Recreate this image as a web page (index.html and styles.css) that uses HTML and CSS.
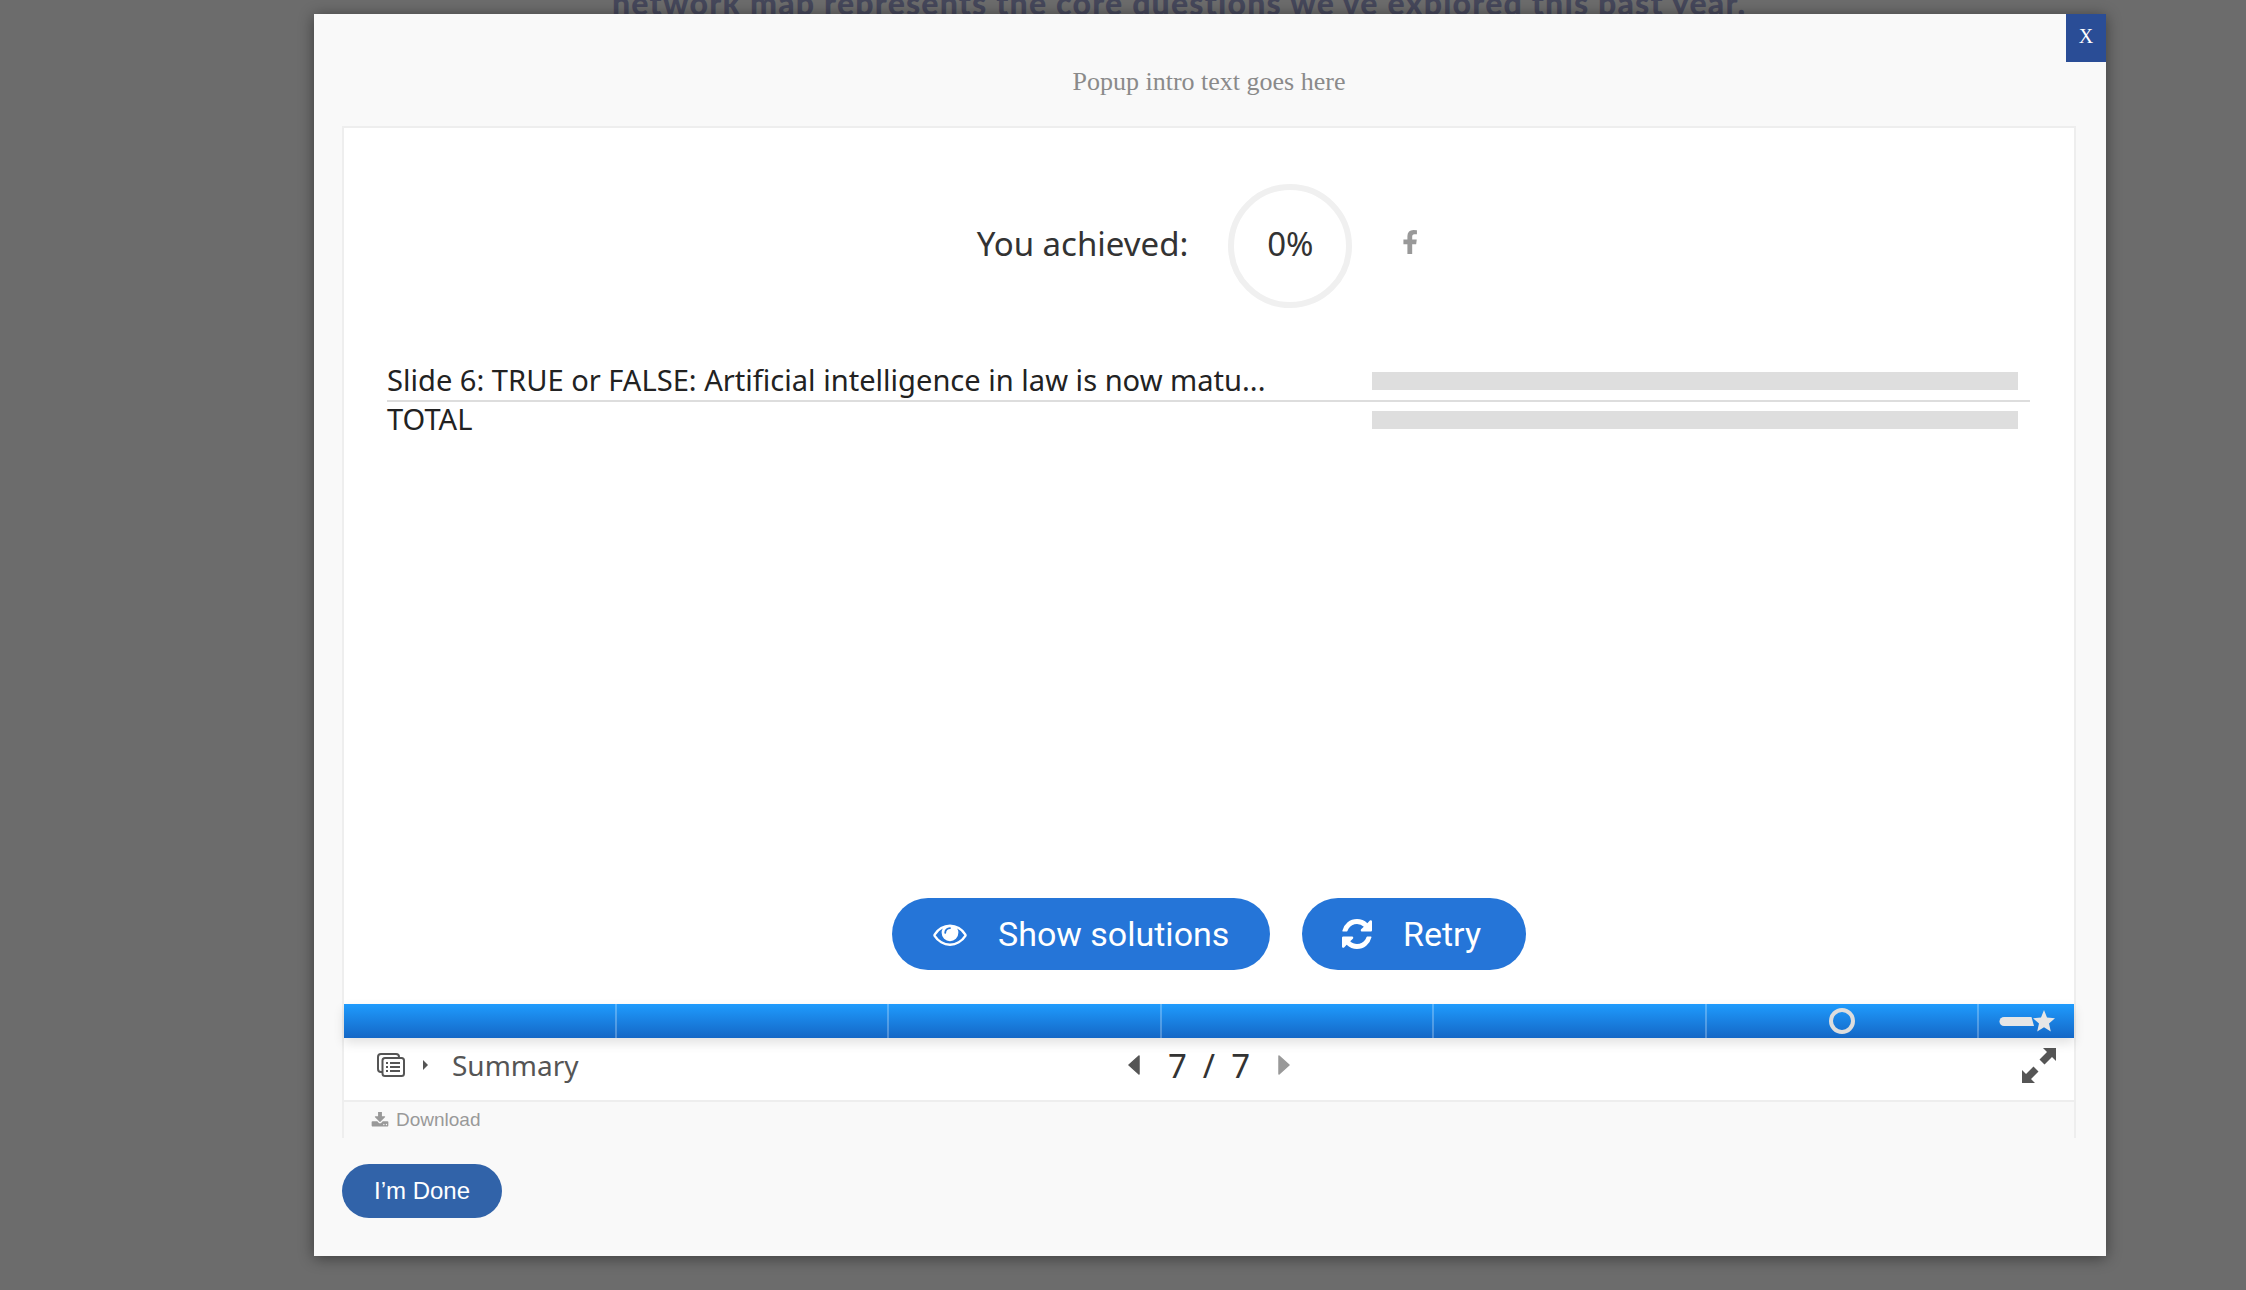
FILE: index.html
```html
<!DOCTYPE html>
<html lang="en">
<head>
  <meta charset="UTF-8" />
  <title>Popup</title>
  <link rel="stylesheet" href="styles.css">
</head>
<body>

<div class="page-text">network map represents the core questions we've explored this past year.</div>

<div class="popup">
  <a class="popup-close">X</a>
  <p class="popup-intro">Popup intro text goes here</p>

  <div class="course">
    <div class="stage">
      <div class="score">
        <span class="score-label">You achieved:</span>
        <span class="score-circle">0%</span>
        <span class="score-share">
          <svg class="icon-f" viewBox="400 0 1000 1536"><path d="M1343 12v264h-157q-86 0-116 36t-30 108v189h293l-39 296h-254v759h-306v-759h-255v-296h255v-218q0-186 104-288.500t277-102.500q147 0 228 12z"/></svg>
        </span>
      </div>

      <!-- rijen met resultaat -->
      <div class="result-row result-row-line">
        <span class="result-title">Slide 6: TRUE or FALSE: Artificial intelligence in law is now matu...</span>
        <span class="result-bar"></span>
      </div>
      <div class="result-row">
        <span class="result-title">TOTAL</span>
        <span class="result-bar"></span>
      </div>

      <div class="actions">
        <a class="btn-round btn-solutions">
          <svg class="icon-eye" viewBox="0 200 1792 1392"><path d="M1664 960q-152-236-381-353 61 104 61 225 0 185-131.500 316.500t-316.500 131.500-316.500-131.500-131.500-316.500q0-121 61-225-229 117-381 353 133 205 333.500 326.500t434.500 121.500 434.500-121.500 333.500-326.500zm-720-384q0-20-14-34t-34-14q-125 0-214.500 89.500t-89.500 214.500q0 20 14 34t34 14 34-14 14-34q0-86 61-147t147-61q20 0 34-14t14-34zm848 384q0 34-20 69-140 230-376.500 368.500t-499.500 138.500-499.500-139-376.500-368q-20-35-20-69t20-69q140-229 376.500-368t499.500-139 499.500 139 376.500 368q20 35 20 69z"/></svg>
          Show solutions
        </a>
        <a class="btn-round btn-retry">
          <svg class="icon-retry" viewBox="128 128 1536 1536"><path d="M1639 1056q0 5-1 7-64 268-268 434.500t-478 166.500q-146 0-282.500-55t-243.500-157l-129 129q-19 19-45 19t-45-19-19-45v-448q0-26 19-45t45-19h448q26 0 45 19t19 45-19 45l-137 137q71 66 161 102t187 36q134 0 250-65t186-179q11-17 53-117 8-23 30-23h192q13 0 22.500 9.500t9.500 22.500zm25-800v448q0 26-19 45t-45 19h-448q-26 0-45-19t-19-45 19-45l138-138q-148-137-349-137-134 0-250 65t-186 179q-11 17-53 117-8 23-30 23h-199q-13 0-22.500-9.500t-9.500-22.500v-7q65-268 270-434.500t480-166.500q146 0 284 55.500t245 156.500l130-129q19-19 45-19t45 19 19 45z"/></svg>
          Retry
        </a>
      </div>
    </div>

    <div class="progress">
      <div class="progress-part"></div>
      <div class="progress-part"></div>
      <div class="progress-part"></div>
      <div class="progress-part"></div>
      <div class="progress-part"></div>
      <div class="progress-part"><span class="progress-dot"></span></div>
      <div class="progress-end">
        <svg class="icon-star" viewBox="0 0 56 22">
          <path d="M5 7H32.500L35 16H5A4.500 4.500 0 0 1 5 7Z"/>
          <path d="M45 0L48 7.500L56 8.200L50 13.500L51.800 21.500L45 17.300L38.200 21.500L40 13.500L34 8.200L42 7.500Z"/>
        </svg>
      </div>
    </div>

    <div class="footer-bar">
      <div class="footer-left">
        <svg class="icon-list" viewBox="0 0 28 24">
          <rect class="icon-line" x="1" y="1" width="21" height="18" rx="3"/>
          <rect class="icon-front" x="5.500" y="5" width="21.500" height="18" rx="2.500"/>
          <path class="icon-line" d="M9 10h2M13 10h10M9 14h2M13 14h10M9 18h2M13 18h10"/>
        </svg>
        <svg class="icon-caret" viewBox="0 0 5 10"><path d="M0 0L5 5L0 10Z"/></svg>
        <span class="footer-title">Summary</span>
      </div>
      <div class="pager">
        <svg class="pager-arrow" viewBox="0 0 12 20"><path d="M11 1V19L1 10Z"/></svg>
        <span class="pager-num">7</span>
        <span class="pager-num">/</span>
        <span class="pager-num">7</span>
        <svg class="pager-arrow pager-next" viewBox="0 0 12 20"><path d="M1 1V19L11 10Z"/></svg>
      </div>
      <div class="footer-right">
        <svg class="icon-expand" viewBox="0 0 34 35">
          <path d="M21 0H34V13L30 9L22.500 16.500L17.500 11.500L25 4Z"/>
          <path d="M13 35H0V22L4 26L11.500 18.500L16.500 23.500L9 31Z"/>
        </svg>
      </div>
    </div>

    <div class="download-bar">
      <svg class="icon-download" viewBox="0 128 1792 1536"><path d="M1344 1344q0-26-19-45t-45-19-45 19-19 45 19 45 45 19 45-19 19-45zm256 0q0-26-19-45t-45-19-45 19-19 45 19 45 45 19 45-19 19-45zm128-224v320q0 40-28 68t-68 28h-1472q-40 0-68-28t-28-68v-320q0-40 28-68t68-28h465l135 136q58 56 136 56t136-56l136-136h464q40 0 68 28t28 68zm-325-569q17 41-14 70l-448 448q-18 19-45 19t-45-19l-448-448q-31-29-14-70 17-39 59-39h256v-448q0-26 19-45t45-19h256q26 0 45 19t19 45v448h256q42 0 59 39z"/></svg>
      Download
    </div>
  </div>

  <a class="btn-done">I’m Done</a>
</div>

</body>
</html>
```

FILE: styles.css
```css
body {
  margin: 0;
  height: 1290px;
  overflow: hidden;
  background: #6c6c6c;
  font-family: 'Noto Sans', sans-serif;
}

/* tekst van de pagina achter de popup */
.page-text {
  height: 14px;
  overflow: hidden;
  padding-left: 612px;
  font-family: 'Lato', sans-serif;
  font-size: 32px;
  font-weight: 900;
  line-height: 5px;
  letter-spacing: 1.2px;
  white-space: nowrap;
  color: #45475a;
}

.popup {
  position: relative;
  box-sizing: border-box;
  width: 1792px;
  height: 1242px;
  margin-left: 314px;
  padding: 0 30px 0 28px;
  background: #f9f9f9;
  box-shadow: 0 2px 14px rgb(0 0 0 / 0.45);
}
.popup-close {
  position: absolute;
  top: 0;
  right: 0;
  width: 40px;
  height: 48px;
  background: #2a4d96;
  color: white;
  font-family: 'Liberation Serif', serif;
  font-size: 20px;
  line-height: 44px;
  text-align: center;
}
.popup-intro {
  height: 112px;
  margin: 0;
  font-family: 'Liberation Serif', serif;
  font-size: 26px;
  line-height: 136px;
  text-align: center;
  color: #8a8a8a;
}

.course {
  border: 2px solid #eeeeee;
  border-bottom: none;
}
.stage {
  display: flex;
  flex-direction: column;
  height: 876px;
  background: white;
}

/* score */
.score {
  display: flex;
  justify-content: center;
  align-items: center;
  padding-top: 56px;
  color: #333;
  font-size: 33px;
}
.score-label { margin-right: 40px; padding-bottom: 6px; }
.score-circle {
  box-sizing: border-box;
  display: flex;
  justify-content: center;
  align-items: center;
  width: 124px;
  height: 124px;
  padding-bottom: 6px;
  border: 6px solid #f0f0f0;
  border-radius: 50%;
  margin-right: 50px;
}
.score-share { display: flex; padding: 0 23px 8px 0; }
.icon-f { width: 16px; height: 24px; fill: #999; }

/* resultaten */
.result-row {
  display: flex;
  align-items: center;
  justify-content: space-between;
  height: 36px;
  margin: 0 44px 0 43px;
  padding-right: 12px;
  color: #222;
  font-size: 29.1px;
  white-space: nowrap;
}
.result-title { padding-bottom: 2px; }
.result-row-line {
  height: 38px;
  margin-top: 56px;
  border-bottom: 2px solid #dddddd;
  padding-bottom: 2px;
  box-sizing: border-box;
}
.result-bar {
  display: block;
  width: 646px;
  height: 18px;
  background: #dedede;
}

/* knoppen */
.actions {
  display: flex;
  justify-content: center;
  gap: 32px;
  margin-top: auto;
  padding-bottom: 34px;
}
.btn-round {
  box-sizing: border-box;
  display: flex;
  align-items: center;
  height: 72px;
  border-radius: 36px;
  background: #2575d8;
  color: white;
  font-family: 'Roboto', sans-serif;
  font-size: 34px;
}
.btn-solutions { width: 378px; padding-left: 41px; gap: 31px; }
.btn-retry { width: 224px; padding-left: 40px; gap: 31px; }
.icon-eye { width: 34px; height: 26px; fill: white; }
.icon-retry { width: 30px; height: 30px; fill: white; }

/* voortgangsbalk */
.progress {
  position: relative;
  display: flex;
  height: 34px;
  background: linear-gradient(#1f9bfd, #1467c6);
  box-shadow: 0 5px 12px rgb(0 0 0 / 0.12);
}
.progress-part {
  box-sizing: border-box;
  flex: 0 0 272.5px;
  display: flex;
  justify-content: center;
  align-items: center;
  border-right: 2px solid rgb(255 255 255 / 0.25);
}
.progress-dot {
  box-sizing: border-box;
  width: 26px;
  height: 26px;
  border: 4px solid #dddddd;
  border-radius: 50%;
}
.progress-end {
  flex: 1;
  display: flex;
  justify-content: flex-end;
  align-items: center;
  padding-right: 19px;
}
.icon-star { width: 56px; height: 22px; fill: #e6e6e6; }

/* onderbalk */
.footer-bar {
  box-sizing: border-box;
  display: flex;
  align-items: center;
  justify-content: space-between;
  height: 64px;
  padding-bottom: 8px;
  background: white;
  border-bottom: 2px solid #eeeeee;
}
.footer-left {
  flex: 1 1 0;
  display: flex;
  align-items: center;
  color: #555;
}
.icon-list { width: 28px; height: 24px; margin-left: 33px; }
.icon-line { fill: none; stroke: #555; stroke-width: 2; }
.icon-front { fill: white; stroke: #555; stroke-width: 2; }
.icon-caret { width: 5px; height: 10px; margin: 0 24px 0 18px; fill: #555; }
.footer-title { font-size: 28px; }
.pager {
  display: flex;
  align-items: center;
  color: #333;
  font-size: 33px;
}
.pager-arrow { width: 12px; height: 20px; fill: #555; stroke: #555; stroke-width: 1.5; stroke-linejoin: round; }
.pager-next { fill: #999; stroke: #999; margin-left: 28px; }
.pager-num { margin-left: 16px; }
.pager-num:first-of-type { margin-left: 28px; }
.footer-right {
  flex: 1 1 0;
  display: flex;
  justify-content: flex-end;
}
.icon-expand { width: 34px; height: 35px; margin-right: 18px; fill: #555; }

.download-bar {
  display: flex;
  align-items: center;
  gap: 7px;
  height: 36px;
  padding-left: 27px;
  color: #999;
  font-family: 'Liberation Sans', sans-serif;
  font-size: 19px;
  background: #f9f9f9;
}
.icon-download { width: 18px; height: 16px; fill: #999; }

.btn-done {
  display: block;
  box-sizing: border-box;
  width: 160px;
  height: 54px;
  margin-top: 26px;
  border-radius: 27px;
  background: #3163a9;
  color: white;
  font-family: 'Liberation Sans', sans-serif;
  font-size: 24px;
  line-height: 54px;
  text-align: center;
}
```
